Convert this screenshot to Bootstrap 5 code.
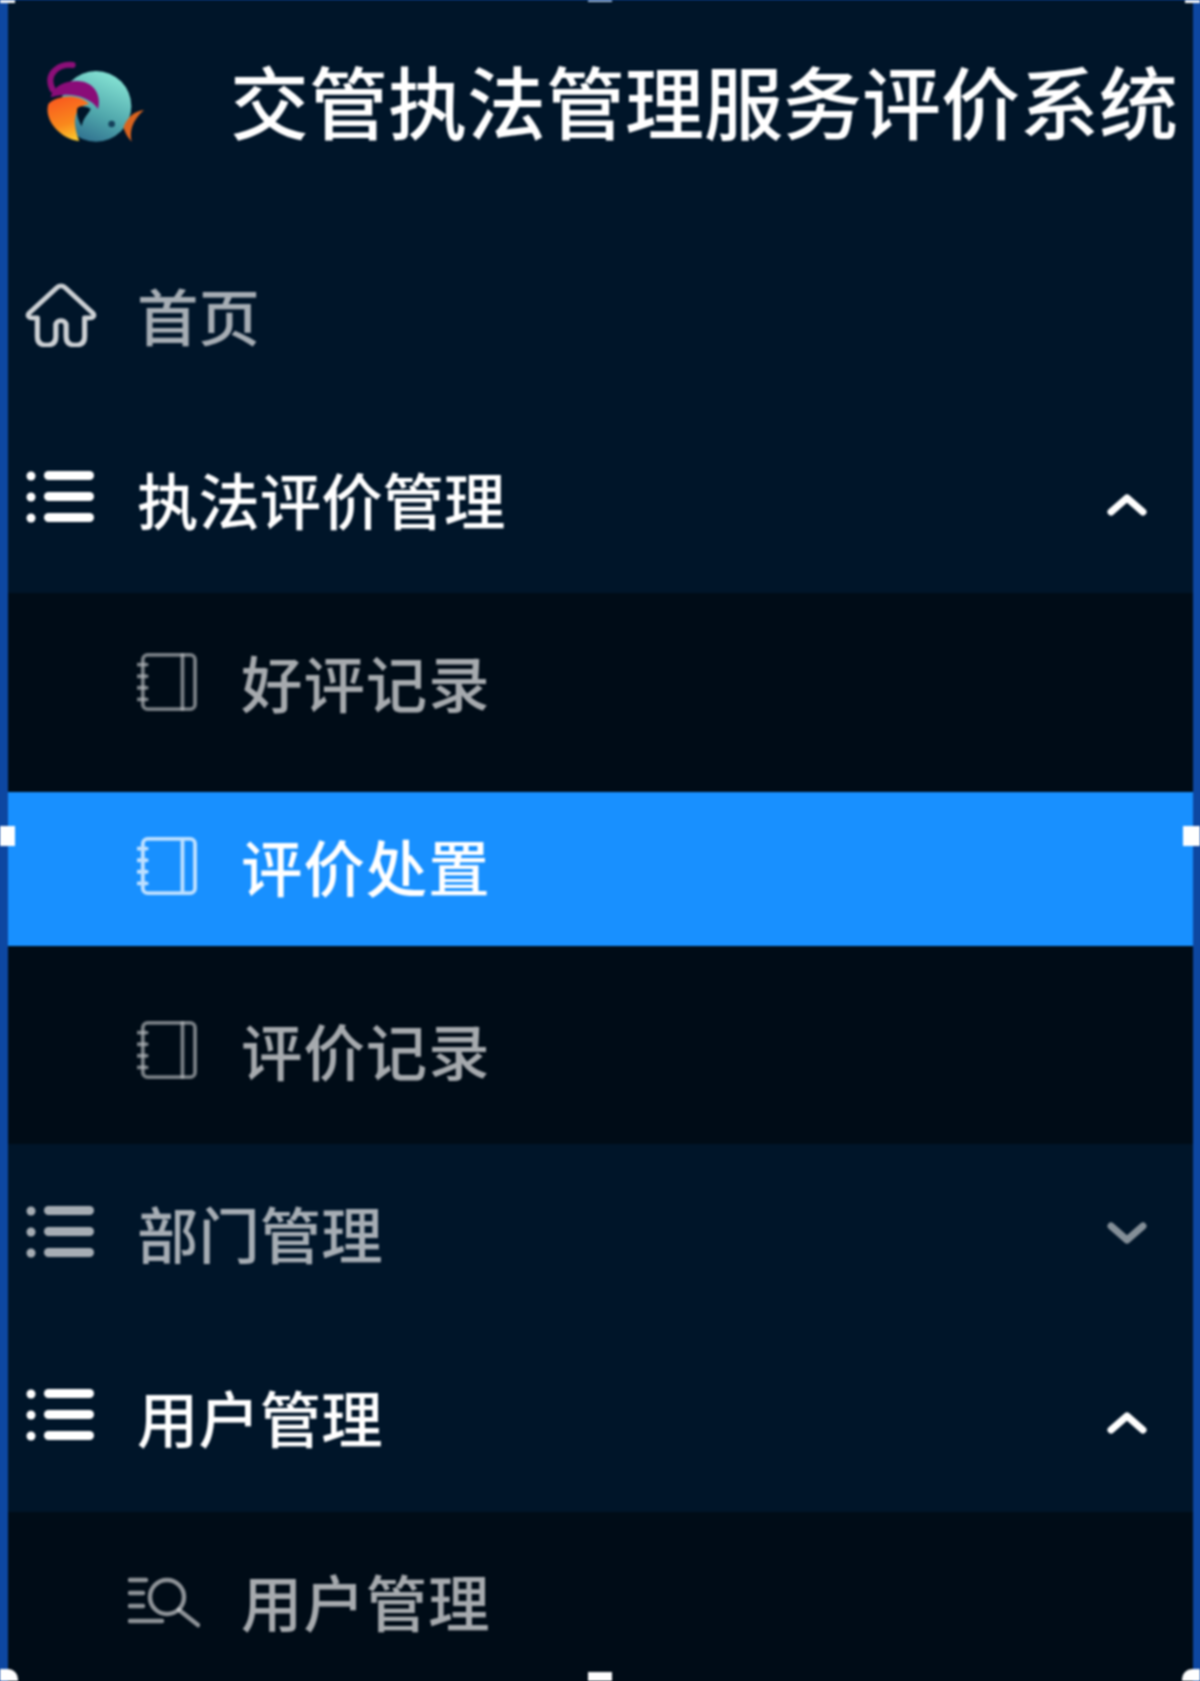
<!DOCTYPE html>
<html lang="zh-CN">
<head>
<meta charset="utf-8">
<title>交管执法管理服务评价系统</title>
<link href="https://cdn.jsdelivr.net/npm/bootstrap@5.3.0/dist/css/bootstrap.min.css" rel="stylesheet">
<style>
html,body{height:1681px;margin:0;overflow:hidden;background:#0d47a1}
.side-shell{position:relative;height:1681px;width:1200px;background:#001529;border-left:8px solid #0d47a1;border-right:7px solid #0d47a1;font-family:"Noto Sans CJK SC","Liberation Sans",sans-serif;filter:blur(.8px)}
.brand-row{height:210px;padding-left:12px}
.brand-logo{width:130px;height:110px;flex:none;margin-right:80px;margin-top:-3px}
.brand-title{font-size:79px;line-height:1;color:#fff;white-space:nowrap;font-weight:500;margin-top:-12px}
.nav-stack{padding-top:16px}
.menu-row{height:183.6px;color:rgba(255,255,255,.65);font-size:61.4px;line-height:1;padding-left:17px;padding-right:46px;font-weight:500}
.menu-row.is-open{color:#fff}
.menu-label{margin-left:40px;white-space:nowrap;margin-top:-6px}
.ico-home{width:74px;height:64px;flex:none;margin-top:-6px;margin-left:-1px;margin-right:-1px;color:rgba(255,255,255,.8)}
.ico-list{width:72px;height:56px;flex:none;margin-top:-7px}
.ico-caret{width:40px;height:24px;flex:none;margin-top:7px}
.ico-caret.is-down{margin-top:-6px;opacity:.8}
.sub-stack{background:#000c17}
.sub-row{height:183.6px;padding-left:129px;color:rgba(255,255,255,.65);font-size:61.4px;line-height:1;font-weight:500}
.sub-row.is-active{color:#fff;background:#1890ff;height:154px;margin:15px 0}
.sub-row .sub-label{margin-left:42px;white-space:nowrap;margin-top:-6px;letter-spacing:1px}
.ico-book{width:60px;height:58px;flex:none;margin-top:-6px;margin-right:2px;opacity:.72}
.ico-search{width:72px;height:54px;flex:none;margin-left:-9px;margin-top:-3px;opacity:.85}
.sub-row .search-label{margin-left:41px}
.grip{position:absolute;background:#fff;z-index:3}
.grip-l{left:-8px;top:826px;width:15px;height:20px}
.grip-r{right:-7px;top:826px;width:17px;height:20px}
.grip-t{left:580px;top:0;width:24px;height:2px;background:#9db7d6}
.grip-b{left:580px;bottom:0;width:24px;height:9px}
.grip-bl{left:-8px;bottom:0;width:18px;height:12px;border-top-right-radius:10px}
.grip-br{right:-7px;bottom:0;width:18px;height:12px;border-top-left-radius:10px}
.grip-tl{left:-8px;top:0;width:15px;height:3px}
.grip-tr{right:-7px;top:0;width:15px;height:3px}
</style>
</head>
<body>
<div class="side-shell">
  <span class="grip grip-tl"></span><span class="grip grip-tr"></span><span class="grip grip-t"></span>
  <span class="grip grip-l"></span><span class="grip grip-r"></span>
  <span class="grip grip-bl"></span><span class="grip grip-br"></span><span class="grip grip-b"></span>

  <div class="brand-row d-flex align-items-center">
    <svg class="brand-logo" viewBox="0 0 390 330" aria-hidden="true">
      <defs>
        <linearGradient id="teal" x1="0.7" y1="0.1" x2="0.3" y2="1"><stop offset="0" stop-color="#7fdccf"/><stop offset=".55" stop-color="#4fa6ab"/><stop offset="1" stop-color="#2f6f8e"/></linearGradient>
        <linearGradient id="flame" x1="0.3" y1="0" x2="0.6" y2="1"><stop offset="0" stop-color="#f9591f"/><stop offset=".6" stop-color="#f9881c"/><stop offset="1" stop-color="#fdc92c"/></linearGradient>
      </defs>
      <circle cx="228" cy="172" r="106" fill="url(#teal)"/>
      <path d="M158 48C118 44 74 72 98 122" fill="none" stroke="#8c0f78" stroke-width="18" stroke-linecap="round"/>
      <path d="M92 145C100 105 150 90 190 98C228 108 244 145 234 180C215 150 170 135 130 138C115 140 100 142 92 145Z" fill="#8a0c78"/>
      <path d="M85 165C110 138 175 132 208 165C170 170 150 205 178 276C125 272 70 215 85 165Z" fill="url(#flame)"/>
      <path d="M172 178C182 168 200 172 212 180C205 196 190 205 185 232C175 215 168 195 172 178Z" fill="#001529"/>
      <circle cx="275" cy="225" r="10" fill="#14405a"/>
      <path d="M372 183C340 188 322 205 310 235C316 255 325 268 335 278C328 250 335 215 372 183Z" fill="#d9641f"/>
    </svg>
    <span class="brand-title">交管执法管理服务评价系统</span>
  </div>

  <div class="nav-stack">
    <div class="menu-row d-flex align-items-center">
      <svg class="ico-home" viewBox="0 0 72 68" preserveAspectRatio="none" fill="none" stroke="currentColor" stroke-width="5" stroke-linejoin="round" stroke-linecap="round" aria-hidden="true"><path d="M5 32 32 5a5 5 0 0 1 8 0L67 32c2 3 0 5-3 5h-5v20c0 6-3 9-9 9-6 0-9-3-9-9V45c0-3-2-5-5-5s-5 2-5 5v12c0 6-3 9-9 9-6 0-9-3-9-9V37H8c-3 0-5-2-3-5Z"/></svg>
      <span class="menu-label">首页</span>
    </div>

    <div class="menu-row is-open d-flex align-items-center">
      <svg class="ico-list" viewBox="0 0 72 56" fill="currentColor" aria-hidden="true"><circle cx="6" cy="6" r="4.5"/><circle cx="6" cy="27" r="4.5"/><circle cx="6" cy="48" r="4.5"/><rect x="19" y="1" width="50" height="9" rx="4.5"/><rect x="19" y="22" width="50" height="9" rx="4.5"/><rect x="19" y="43" width="50" height="9" rx="4.5"/></svg>
      <span class="menu-label">执法评价管理</span>
      <svg class="ico-caret ms-auto" viewBox="0 0 40 24" fill="none" stroke="currentColor" stroke-width="7" stroke-linecap="round" stroke-linejoin="round" aria-hidden="true"><path d="M4 19 20 5l16 14"/></svg>
    </div>

    <div class="sub-stack">
      <div class="sub-row d-flex align-items-center">
        <svg class="ico-book" viewBox="0 0 62 60" fill="none" stroke="currentColor" stroke-width="4" stroke-linecap="round" aria-hidden="true"><rect x="6" y="2" width="54" height="56" rx="5"/><path d="M47 2v56M1 12h9M1 24h9M1 36h9M1 48h9"/></svg>
        <span class="sub-label">好评记录</span>
      </div>
      <div class="sub-row is-active d-flex align-items-center">
        <svg class="ico-book" viewBox="0 0 62 60" fill="none" stroke="currentColor" stroke-width="4" stroke-linecap="round" aria-hidden="true"><rect x="6" y="2" width="54" height="56" rx="5"/><path d="M47 2v56M1 12h9M1 24h9M1 36h9M1 48h9"/></svg>
        <span class="sub-label">评价处置</span>
      </div>
      <div class="sub-row d-flex align-items-center">
        <svg class="ico-book" viewBox="0 0 62 60" fill="none" stroke="currentColor" stroke-width="4" stroke-linecap="round" aria-hidden="true"><rect x="6" y="2" width="54" height="56" rx="5"/><path d="M47 2v56M1 12h9M1 24h9M1 36h9M1 48h9"/></svg>
        <span class="sub-label">评价记录</span>
      </div>
    </div>

    <div class="menu-row d-flex align-items-center">
      <svg class="ico-list" viewBox="0 0 72 56" fill="currentColor" aria-hidden="true"><circle cx="6" cy="6" r="4.5"/><circle cx="6" cy="27" r="4.5"/><circle cx="6" cy="48" r="4.5"/><rect x="19" y="1" width="50" height="9" rx="4.5"/><rect x="19" y="22" width="50" height="9" rx="4.5"/><rect x="19" y="43" width="50" height="9" rx="4.5"/></svg>
      <span class="menu-label">部门管理</span>
      <svg class="ico-caret is-down ms-auto" viewBox="0 0 40 24" fill="none" stroke="currentColor" stroke-width="7" stroke-linecap="round" stroke-linejoin="round" aria-hidden="true"><path d="M4 5l16 14L36 5"/></svg>
    </div>

    <div class="menu-row is-open d-flex align-items-center">
      <svg class="ico-list" viewBox="0 0 72 56" fill="currentColor" aria-hidden="true"><circle cx="6" cy="6" r="4.5"/><circle cx="6" cy="27" r="4.5"/><circle cx="6" cy="48" r="4.5"/><rect x="19" y="1" width="50" height="9" rx="4.5"/><rect x="19" y="22" width="50" height="9" rx="4.5"/><rect x="19" y="43" width="50" height="9" rx="4.5"/></svg>
      <span class="menu-label">用户管理</span>
      <svg class="ico-caret ms-auto" viewBox="0 0 40 24" fill="none" stroke="currentColor" stroke-width="7" stroke-linecap="round" stroke-linejoin="round" aria-hidden="true"><path d="M4 19 20 5l16 14"/></svg>
    </div>

    <div class="sub-stack">
      <div class="sub-row d-flex align-items-center">
        <svg class="ico-search" viewBox="0 0 72 54" fill="none" stroke="currentColor" stroke-width="4.5" stroke-linecap="round" aria-hidden="true"><path d="M2 5h16M2 18h13M2 31h13M2 46h32"/><circle cx="39" cy="22" r="17"/><path d="M51 35 70 50"/></svg>
        <span class="sub-label search-label">用户管理</span>
      </div>
    </div>
  </div>
</div>
</body>
</html>
